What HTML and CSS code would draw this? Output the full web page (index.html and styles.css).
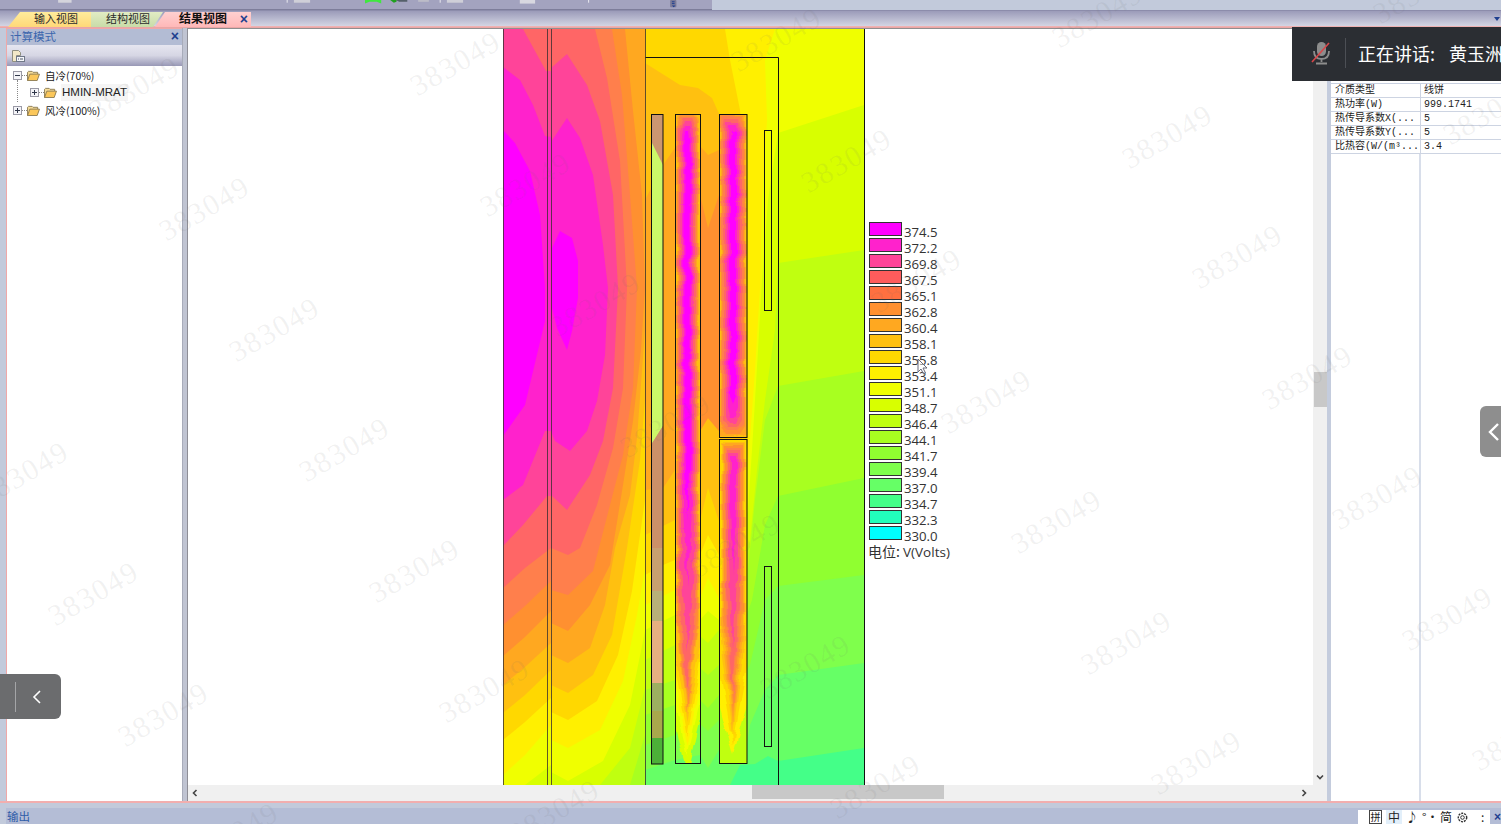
FILE: index.html
```html
<!DOCTYPE html>
<html lang="zh">
<head>
<meta charset="utf-8">
<title>结果视图</title>
<link rel="stylesheet" href="styles.css">
</head>
<body>
<svg class="defs" width="0" height="0">
  <defs>
    <symbol id="folder" viewBox="0 0 14 12">
      <path d="M.5 11.5V2.5l1-1h4l1 1h5v2" fill="#f7dd98" stroke="#8a7a50" stroke-width="1"/>
      <path d="M.5 11.5l2.5-7h10.5l-2.5 7z" fill="#fbc75a" stroke="#8a7a50" stroke-width="1"/>
    </symbol>
    <symbol id="plus" viewBox="0 0 9 9">
      <rect x=".5" y=".5" width="8" height="8" fill="#f4f4f8" stroke="#9a9aa6"/>
      <path d="M2 4.5h5M4.5 2v5" stroke="#30384a"/>
    </symbol>
    <symbol id="minus" viewBox="0 0 9 9">
      <rect x=".5" y=".5" width="8" height="8" fill="#f4f4f8" stroke="#9a9aa6"/>
      <path d="M2 4.5h5" stroke="#30384a"/>
    </symbol>
  </defs>
</svg>

<div class="topbar">
  <svg class="top-icons" width="712" height="10" viewBox="0 0 712 10">
    <rect x="25" y="0" width="15" height="3" fill="#d4d4dc"/>
    <rect x="279" y="0" width="1" height="3" fill="#f0f0f4"/>
    <rect x="287" y="0" width="18" height="3" fill="#cfcfd8"/>
    <path d="M366 0h18v4l-5-2h-8l-5 2z" fill="#3fe83f"/>
    <path d="M393 0h7l4 2h9V0z" fill="#55606a"/>
    <path d="M394 0h7v2l-3 1z" fill="#1fa01f"/>
    <rect x="425" y="0" width="12" height="2" fill="#bcbcc8"/>
    <rect x="449" y="0" width="1" height="3" fill="#f0f0f4"/>
    <rect x="457" y="0" width="18" height="3" fill="#cfcfd8"/>
    <rect x="538" y="0" width="17" height="4" fill="#d8d8e0"/>
    <rect x="614" y="0" width="1" height="3" fill="#f0f0f4"/>
    <rect x="705" y="0" width="7" height="8" rx="1" fill="#7a7a98"/>
    <path d="M707 2h3M707 4h3" stroke="#1a3a90"/>
    <path d="M707 6h4l-2 2z" fill="#1a3a90"/>
  </svg>
</div>

<div class="tabstrip">
  <div class="tab tab-input">输入视图</div>
  <div class="tab tab-struct">结构视图</div>
  <div class="tab tab-result">结果视图<span class="tab-close">×</span></div>
  <span class="strip-arrow"></span>
</div>

<div class="work">
  <aside class="calc-panel">
    <div class="panel-title"><span>计算模式</span><span class="panel-close">×</span></div>
    <div class="panel-tools">
      <svg width="14" height="14" viewBox="0 0 14 14">
        <path d="M1.5 1.5h6l2 2v3h-4v6h-4z" fill="#f2e8c8" stroke="#8f8f80"/>
        <rect x="5.5" y="7.5" width="8" height="5" fill="#f4f6fa" stroke="#707888"/>
        <path d="M7 10h1M9 10h3" stroke="#505868"/>
      </svg>
    </div>
    <div class="tree">
      <div class="tree-row">
        <svg class="exp"><use href="#minus"/></svg><i class="dots"></i>
        <svg class="fold"><use href="#folder"/></svg>
        <span class="node">自冷(70%)</span>
      </div>
      <div class="tree-row tree-child">
        <svg class="exp"><use href="#plus"/></svg><i class="dots"></i>
        <svg class="fold"><use href="#folder"/></svg>
        <span class="node node-sel">HMIN-MRAT</span>
      </div>
      <div class="tree-row">
        <svg class="exp"><use href="#plus"/></svg><i class="dots"></i>
        <svg class="fold"><use href="#folder"/></svg>
        <span class="node">风冷(100%)</span>
      </div>
    </div>
  </aside>

  <div class="splitter"></div>

  <main class="view">
    <div class="view-body">
      <div class="view-canvas">
        <svg class="field" width="362" height="756" viewBox="503 29 362 756">
          <defs>
            <filter id="wavy" x="-60%" y="-5%" width="220%" height="110%" color-interpolation-filters="sRGB">
              <feTurbulence type="fractalNoise" baseFrequency="0.012 0.07" numOctaves="2" seed="4"/>
              <feDisplacementMap in="SourceGraphic" scale="7" xChannelSelector="R" yChannelSelector="G"/>
            </filter>
            <clipPath id="clip1"><rect x="675" y="114" width="25" height="649"/></clipPath>
            <clipPath id="clip2"><rect x="719" y="114" width="28" height="323"/></clipPath>
            <clipPath id="clip3"><rect x="719" y="439" width="28" height="324"/></clipPath>
          </defs>

          <!-- winding window and outer region -->
          <rect class="t18" x="645" y="29" width="220" height="756"/>
          <polygon class="t17" points="645,29 864,29 864,748 778,761 768,756 755,764 740,765 730,785 645,785"/>
          <polygon class="t16" points="645,29 864,29 864,663 778,675 765,690 750,725 747,745 719,750 708,768 700,755 675,760 645,770"/>
          <polygon class="t15" points="645,29 864,29 864,575 778,586 765,600 750,665 719,720 708,731 700,724 675,735 645,745"/>
          <polygon class="t14" points="645,29 864,29 864,478 778,496 765,525 752,600 719,695 708,708 700,700 675,705 645,715"/>
          <polygon class="t13" points="645,29 864,29 864,371 778,386 765,420 755,500 747,580 719,665 708,675 700,668 675,680 645,690"/>
          <polygon class="t12" points="645,29 864,29 864,250 778,263 775,330 765,400 757,470 750,540 719,630 708,643 700,636 675,645 645,660"/>
          <polygon class="t11" points="645,29 864,29 864,105 778,133 768,200 762,280 758,350 752,450 748,510 719,620 708,611 700,620 675,615 645,630"/>
          <polygon class="t10" points="645,29 775,29 765,60 767,120 762,200 760,288 755,370 750,440 747,480 719,598 708,578 700,598 675,590 645,605"/>
          <polygon class="t9" points="645,29 725,29 730,60 740,110 748,190 748,440 747,460 719,555 708,535 700,555 675,560 663,565 645,575"/>
          <polygon class="t8" points="645,63 680,85 698,88 712,98 720,116 747,116 747,420 719,521 708,488 700,521 675,520 645,535"/>
          <polygon class="t7" points="645,200 663,165 675,148 700,146 708,155 719,150 747,300 719,431 708,418 700,431 675,470 663,488 645,490"/>
          <polygon class="t6" points="700,195 708,228 719,195 719,431 708,418 700,431"/>

          <!-- core gap region -->
          <rect class="t14" x="551" y="29" width="94" height="756"/>
          <polygon class="t13" points="551,29 645,29 645,735 630,785 551,785"/>
          <polygon class="t12" points="551,29 645,29 645,688 630,748 600,785 551,785"/>
          <polygon class="t11" points="551,29 645,29 645,631 630,705 603,761 568,781 551,772"/>
          <polygon class="t10" points="551,29 645,29 645,568 637,615 623,681 600,730 568,748 551,740"/>
          <polygon class="t9" points="551,29 645,29 645,500 632,591 618,655 597,701 568,720 551,712"/>
          <polygon class="t8" points="551,29 645,29 645,400 640,460 627,548 612,635 593,675 568,693 551,685"/>
          <polygon class="t7" points="551,29 645,29 645,330 637,438 630,495 615,548 605,605 590,648 568,663 551,655"/>
          <polygon class="t6" points="551,29 625,29 633,111 642,195 645,288 641,350 633,421 623,485 610,565 590,605 568,631 551,623"/>
          <polygon class="t5" points="551,29 612,29 622,95 630,195 637,288 633,388 623,455 610,505 593,571 568,595 551,590"/>
          <polygon class="t4" points="551,29 595,29 607,78 620,161 627,288 623,388 613,448 597,505 580,548 568,555 551,548"/>
          <polygon class="t3" points="551,68 567,54 587,85 600,121 613,195 618,288 613,388 603,441 590,475 567,510 551,495"/>
          <polygon class="t2" points="551,142 567,118 580,138 593,175 603,245 608,288 605,355 597,401 587,431 570,451 555,441 551,431"/>
          <polygon class="t1" points="552,248 560,231 572,238 578,261 578,298 572,331 567,350 557,328 552,308"/>

          <!-- core limb -->
          <rect class="t12" x="503" y="29" width="48" height="756"/>
          <polygon class="t11" points="503,29 551,29 551,765 525,785 503,785"/>
          <polygon class="t10" points="503,29 551,29 551,725 525,755 503,775"/>
          <polygon class="t9" points="503,29 551,29 551,698 525,722 503,740"/>
          <polygon class="t8" points="503,29 551,29 551,670 525,695 503,713"/>
          <polygon class="t7" points="503,29 551,29 551,643 525,667 503,685"/>
          <polygon class="t6" points="503,29 551,29 551,611 525,637 503,656"/>
          <polygon class="t5" points="503,29 551,29 551,581 525,606 503,625"/>
          <polygon class="t4" points="503,29 551,29 551,548 525,568 503,588"/>
          <polygon class="t3" points="503,29 523,29 546,71 551,71 551,496 547,496 523,525 503,546"/>
          <polygon class="t2" points="503,67 520,80 533,105 545,136 551,137 551,431 545,431 523,485 503,500"/>
          <polygon class="t1" points="503,130 515,143 530,171 540,215 545,288 545,321 525,405 503,436"/>

          <!-- left winding tray -->
          <rect fill="#cc9670" x="651" y="114" width="12" height="331"/>
          <polygon fill="#ccf868" points="651,141 663,165 663,426 651,445"/>
          <rect fill="#cc9068" x="651" y="445" width="12" height="103"/>
          <polygon fill="#cc9068" points="651,445 663,426 663,450 651,450"/>
          <rect fill="#c8a070" x="651" y="548" width="12" height="43"/>
          <rect fill="#b8b078" x="651" y="591" width="12" height="30"/>
          <rect fill="#e6b080" x="651" y="621" width="12" height="62"/>
          <rect fill="#9cb060" x="651" y="683" width="12" height="28"/>
          <rect fill="#a8a84c" x="651" y="711" width="12" height="27"/>
          <rect fill="#4cb038" x="651" y="738" width="12" height="26"/>

          <!-- low voltage winding -->
          <g clip-path="url(#clip1)"><g filter="url(#wavy)">
            <path class="t12" d="M670 100H705V700L687.500 775L670 700Z"/>
            <path class="t11" d="M670 100H705V680L687.500 755L670 680Z"/>
            <path class="t10" d="M670 100H705V660L687.500 745L670 660Z"/>
            <path class="t9" d="M670 100H705V640L687.500 735L670 640Z"/>
            <path class="t8" d="M670 100H705V620L687.500 722L670 620Z"/>
            <path class="t7" d="M678 115H697L699 122V620L687.500 715L676 620V122Z"/>
            <path class="t6" d="M680 116H695L698 124V620L687.500 708L677 620V124Z"/>
            <path class="t5" d="M681 118H694L697 128V610L687.500 700L678 610V128Z"/>
            <path class="t4" d="M683 120H692L696 130V600L687.500 690L679 600V130Z"/>
            <path class="t3" d="M684 123H691L694 133V570L687.500 650L681 570V133Z"/>
            <path class="t2" d="M685 127H690L692 136V510L687.500 585L683 510V136Z"/>
            <path class="t1" d="M686 133H689L690.500 142V460L687.500 520L684.500 460V142Z"/>
          </g></g>
          <g clip-path="url(#clip2)"><g filter="url(#wavy)">
            <path class="t8" d="M712 106H754V445H712Z"/>
            <path class="t7" d="M720 115H746V436H720Z"/>
            <path class="t6" d="M722 116H744L745 124V426L740 434H726L721 426V124Z"/>
            <path class="t5" d="M724 117H742L744 126V424L738 431H728L722 424V126Z"/>
            <path class="t4" d="M726 119H740L742 128V420L737 428H729L724 420V128Z"/>
            <path class="t3" d="M727 122H739L740 132V414L736 424H730L726 414V132Z"/>
            <path class="t2" d="M729 125H737L738 136V408L735 418H731L728 408V136Z"/>
            <path class="t1" d="M731 132H735L736 144V395L733 405L730 395V144Z"/>
          </g></g>
          <g clip-path="url(#clip3)"><g filter="url(#wavy)">
            <path class="t13" d="M712 432H754V775H712Z"/>
            <path class="t10" d="M712 432H754V680L733 755L712 680Z"/>
            <path class="t9" d="M718 436H748V660L733 745L718 660Z"/>
            <path class="t8" d="M721 442H745V640L733 735L721 640Z"/>
            <path class="t7" d="M722 443H744V625L733 725L722 625Z"/>
            <path class="t6" d="M723 445H743V610L733 715L723 610Z"/>
            <path class="t5" d="M725 447H741V600L733 705L725 600Z"/>
            <path class="t4" d="M726 449H740V590L733 690L726 590Z"/>
            <path class="t3" d="M728 452H738V560L733 650L728 560Z"/>
            <path class="t2" d="M730 456H736V510L733 575L730 510Z"/>
          </g></g>

          <!-- outlines -->
          <g class="outline-soft">
            <path d="M503.500 29V785M547.500 29V785M551.500 29V785M645.500 29V785"/>
          </g>
          <g class="outline">
            <path d="M645.500 57.500H778.500V785M864.500 29V785"/>
            <rect x="651.500" y="114.500" width="11.500" height="649.500"/>
            <rect x="675.500" y="114.500" width="25" height="649"/>
            <rect x="719.500" y="114.500" width="27.500" height="323"/>
            <rect x="719.500" y="439.500" width="27.500" height="324"/>
            <rect x="764.500" y="130.500" width="7" height="180"/>
            <rect x="764.500" y="566.500" width="7" height="180"/>
          </g>
        </svg>
        <div class="legend">
          <div class="legend-row"><i class="sw s1"></i>374.5</div>
          <div class="legend-row"><i class="sw s2"></i>372.2</div>
          <div class="legend-row"><i class="sw s3"></i>369.8</div>
          <div class="legend-row"><i class="sw s4"></i>367.5</div>
          <div class="legend-row"><i class="sw s5"></i>365.1</div>
          <div class="legend-row"><i class="sw s6"></i>362.8</div>
          <div class="legend-row"><i class="sw s7"></i>360.4</div>
          <div class="legend-row"><i class="sw s8"></i>358.1</div>
          <div class="legend-row"><i class="sw s9"></i>355.8</div>
          <div class="legend-row"><i class="sw s10"></i>353.4</div>
          <div class="legend-row"><i class="sw s11"></i>351.1</div>
          <div class="legend-row"><i class="sw s12"></i>348.7</div>
          <div class="legend-row"><i class="sw s13"></i>346.4</div>
          <div class="legend-row"><i class="sw s14"></i>344.1</div>
          <div class="legend-row"><i class="sw s15"></i>341.7</div>
          <div class="legend-row"><i class="sw s16"></i>339.4</div>
          <div class="legend-row"><i class="sw s17"></i>337.0</div>
          <div class="legend-row"><i class="sw s18"></i>334.7</div>
          <div class="legend-row"><i class="sw s19"></i>332.3</div>
          <div class="legend-row"><i class="sw s20"></i>330.0</div>
          <div class="legend-unit">电位: <span>V(Volts)</span></div>
        </div>
      </div>
      <div class="hscroll">
        <svg class="hs-arrow" width="8" height="8" viewBox="0 0 8 8"><path d="M5.500 1L2.500 4l3 3" fill="none" stroke="#444" stroke-width="1.600"/></svg>
        <div class="hs-thumb"></div>
        <svg class="hs-arrow hs-end" width="8" height="8" viewBox="0 0 8 8"><path d="M2.500 1l3 3-3 3" fill="none" stroke="#444" stroke-width="1.600"/></svg>
      </div>
    </div>
    <div class="vscroll">
      <div class="vs-thumb"></div>
      <svg class="vs-arrow" width="8" height="8" viewBox="0 0 8 8"><path d="M1 2.500l3 3 3-3" fill="none" stroke="#444" stroke-width="1.600"/></svg>
    </div>
  </main>

  <aside class="props">
    <div class="props-spacer"></div>
    <div class="prop-row"><span class="prop-k">介质类型</span><span class="prop-v">线饼</span></div>
    <div class="prop-row"><span class="prop-k">热功率(W)</span><span class="prop-v">999.1741</span></div>
    <div class="prop-row"><span class="prop-k">热传导系数X(...</span><span class="prop-v">5</span></div>
    <div class="prop-row"><span class="prop-k">热传导系数Y(...</span><span class="prop-v">5</span></div>
    <div class="prop-row"><span class="prop-k">比热容(W/(m³...</span><span class="prop-v">3.4</span></div>
    <div class="props-rest"><span class="prop-k"></span><span class="prop-v"></span></div>
  </aside>
</div>

<footer class="status">
  <span class="status-title">输出</span>
  <div class="ime">
    <span class="ime-box">拼</span>
    <span class="ime-on">中</span>
    <span class="ime-moon">♪</span>
    <span class="ime-dots">°•</span>
    <span>简</span>
    <svg width="13" height="13" viewBox="0 0 13 13"><circle cx="6.500" cy="6.500" r="4.200" fill="none" stroke="#333" stroke-width="1.400" stroke-dasharray="2 1"/><circle cx="6.500" cy="6.500" r="1.800" fill="none" stroke="#333"/></svg>
    <span class="ime-more">:</span>
  </div>
  <span class="status-x">×</span>
</footer>

<div class="speaking">
  <svg width="22" height="24" viewBox="0 0 22 24">
    <rect x="7" y="1" width="9" height="14" rx="4.500" fill="#8d8d8d"/>
    <path d="M4 10c0 6 3 8 7.500 8s7.500-2 7.500-8M11.500 18v3M6 22.500h11" fill="none" stroke="#8d8d8d" stroke-width="1.800"/>
    <path d="M2 21L19 2" stroke="#d9474a" stroke-width="1.600"/>
  </svg>
  <i class="speaking-div"></i>
  <span class="speaking-text">正在讲话:</span>
  <span class="speaking-name">黄玉洲</span>
</div>

<div class="handle handle-left">
  <i class="handle-bar"></i>
  <svg width="10" height="16" viewBox="0 0 10 16"><path d="M8 2L2 8l6 6" fill="none" stroke="#fff" stroke-width="1.600"/></svg>
</div>
<div class="handle handle-right">
  <svg width="14" height="22" viewBox="0 0 14 22"><path d="M11 3L3 11l8 8" fill="none" stroke="#fff" stroke-width="2.400"/></svg>
</div>

<svg class="cursor" width="12" height="18" viewBox="0 0 12 18">
  <path d="M1 1v13l3-3 2.500 5 2-1-2.500-5h4z" fill="#ffffff" fill-opacity=".5" stroke="#6a6a7a"/>
</svg>

<svg class="watermarks" width="1501" height="824" viewBox="0 0 1501 824">
  <g transform="translate(3,1)">
  <text transform="translate(133,90) rotate(-30)">383049</text>
  <text transform="translate(203,210) rotate(-30)">383049</text>
  <text transform="translate(273,331) rotate(-30)">383049</text>
  <text transform="translate(343,451) rotate(-30)">383049</text>
  <text transform="translate(413,572) rotate(-30)">383049</text>
  <text transform="translate(483,692) rotate(-30)">383049</text>
  <text transform="translate(553,813) rotate(-30)">383049</text>
  <text transform="translate(22,475) rotate(-30)">383049</text>
  <text transform="translate(92,595) rotate(-30)">383049</text>
  <text transform="translate(162,716) rotate(-30)">383049</text>
  <text transform="translate(232,836) rotate(-30)">383049</text>
  <text transform="translate(454,65) rotate(-30)">383049</text>
  <text transform="translate(524,186) rotate(-30)">383049</text>
  <text transform="translate(594,306) rotate(-30)">383049</text>
  <text transform="translate(664,427) rotate(-30)">383049</text>
  <text transform="translate(734,547) rotate(-30)">383049</text>
  <text transform="translate(804,668) rotate(-30)">383049</text>
  <text transform="translate(874,788) rotate(-30)">383049</text>
  <text transform="translate(775,41) rotate(-30)">383049</text>
  <text transform="translate(845,162) rotate(-30)">383049</text>
  <text transform="translate(915,282) rotate(-30)">383049</text>
  <text transform="translate(985,403) rotate(-30)">383049</text>
  <text transform="translate(1055,523) rotate(-30)">383049</text>
  <text transform="translate(1125,644) rotate(-30)">383049</text>
  <text transform="translate(1195,764) rotate(-30)">383049</text>
  <text transform="translate(1096,17) rotate(-30)">383049</text>
  <text transform="translate(1166,138) rotate(-30)">383049</text>
  <text transform="translate(1236,258) rotate(-30)">383049</text>
  <text transform="translate(1306,379) rotate(-30)">383049</text>
  <text transform="translate(1376,499) rotate(-30)">383049</text>
  <text transform="translate(1446,620) rotate(-30)">383049</text>
  <text transform="translate(1516,740) rotate(-30)">383049</text>
  <text transform="translate(1487,114) rotate(-30)">383049</text>
  <text transform="translate(1417,-7) rotate(-30)">383049</text>
  </g>
</svg>
</body>
</html>
```
FILE: styles.css
```css
* { box-sizing: border-box; }
html, body { margin: 0; padding: 0; }
body {
  width: 1501px;
  height: 824px;
  overflow: hidden;
  display: flex;
  flex-direction: column;
  position: relative;
  background: #c2cadb;
  font-family: "Liberation Sans", "Noto Sans CJK SC", sans-serif;
}
.defs { position: absolute; }

.topbar {
  height: 10px;
  flex: none;
  background: #c2cadb;
}
.top-icons { display: block; background: #a3a3bf; border-bottom: 1px solid #7d7d9a; }

.tabstrip {
  height: 18px;
  flex: none;
  display: flex;
  align-items: flex-end;
  padding: 0 0 1px 8px;
  position: relative;
  background: linear-gradient(#9b9bb9, #d4d6e4 90%, #f0b4b4 90%, #e8a0a0);
  border-top: 1px solid #8c8cab;
}
.tab {
  height: 15px;
  font: 11px/12px "Noto Sans CJK SC", sans-serif;
  color: #2c2c2c;
  text-align: left;
}
.tab-input {
  width: 83px;
  padding-left: 26px;
  background: linear-gradient(#ffec9c, #ffd878);
  clip-path: polygon(12px 0, 100% 0, 100% 100%, 0 100%);
}
.tab-struct {
  width: 72px;
  padding-left: 15px;
  background: linear-gradient(#e2ecc4, #c8dca8);
  clip-path: polygon(0 0, 100% 0, 62px 100%, 0 100%);
}
.tab-result {
  width: 96px;
  margin-left: -8px;
  padding-left: 24px;
  font-size: 12px;
  font-weight: 700;
  color: #111;
  position: relative;
  background: linear-gradient(#ffd0d0, #ffb8b8);
  clip-path: polygon(10px 0, 100% 0, 100% 100%, 0 100%);
}
.tab-close {
  position: absolute;
  right: 3px;
  top: 0;
  color: #1f3f8f;
  font: 700 14px/15px "Liberation Sans", sans-serif;
}
.strip-arrow {
  position: absolute;
  right: 1px;
  top: 6px;
  border: 3px solid transparent;
  border-top: 4px solid #1f3f8f;
}

.work {
  height: 775px;
  flex: none;
  display: flex;
  padding-left: 6px;
  border-bottom: 2px solid #f2aeae;
}

.calc-panel {
  width: 176px;
  flex: none;
  display: flex;
  flex-direction: column;
  background: #fff;
  border-left: 1px solid #efa8a8;
  border-top: 1px solid #efa8a8;
}
.panel-title {
  height: 16px;
  flex: none;
  display: flex;
  justify-content: space-between;
  align-items: center;
  padding: 0 3px 2px 3px;
  background: #b3bcd4;
  color: #3b66ad;
  font: 11.500px/14px "Noto Sans CJK SC", sans-serif;
}
.panel-close { color: #1f3f8f; font: 700 14px/14px "Liberation Sans", sans-serif; }
.panel-tools {
  height: 21px;
  flex: none;
  padding: 4px 0 0 4px;
  background: linear-gradient(#e6e6f0, #d6d6e4 50%, #9898b6);
}
.tree { position: relative; padding-top: .5px; }
.tree-row {
  height: 17.500px;
  display: flex;
  align-items: center;
  padding-left: 6px;
  position: relative;
  font: 10.500px/17px "Noto Sans CJK SC", sans-serif;
  color: #222;
}
.tree-child { padding-left: 23px; }
.tree-child::before {
  content: "";
  position: absolute;
  left: 10px;
  top: -4px;
  height: 22px;
  width: 12px;
  border-left: 1px dotted #888;
}
.exp { width: 9px; height: 9px; flex: none; }
.dots { width: 5px; flex: none; border-top: 1px dotted #888; }
.fold { width: 13px; height: 11px; flex: none; }
.node { margin-left: 4px; padding: 0 1px; }
.node-sel { font: 11.500px/17px "Liberation Sans", sans-serif; background: #f5f5f5; }

.splitter {
  width: 6px;
  flex: none;
  background: #c0c4d2;
  border-right: 1px solid #8e8e96;
  border-left: 1px solid #a8acba;
}

.view {
  flex: 1;
  display: flex;
  background: #fff;
  border-top: 1px solid #8f8f8f;
  min-width: 0;
}
.view-body { flex: 1; display: flex; flex-direction: column; min-width: 0; }
.view-canvas {
  flex: 1;
  min-height: 0;
  display: flex;
  padding-left: 315px;
}
.field { display: block; flex: none; }

.t1 { fill: #ff00ff; } .t2 { fill: #ff22cc; } .t3 { fill: #ff4499; } .t4 { fill: #ff6666; }
.t5 { fill: #ff7f4c; } .t6 { fill: #ff9030; } .t7 { fill: #ffa820; } .t8 { fill: #ffc010; }
.t9 { fill: #ffd800; } .t10 { fill: #fff000; } .t11 { fill: #f0ff00; } .t12 { fill: #d8ff00; }
.t13 { fill: #c0ff10; } .t14 { fill: #a8ff20; } .t15 { fill: #90ff30; } .t16 { fill: #7fff4c; }
.t17 { fill: #66ff66; } .t18 { fill: #44ff88; }
.outline { fill: none; stroke: #111; stroke-width: 1; }
.outline-soft { fill: none; stroke: #3a3030; stroke-opacity: .8; stroke-width: 1; }

.legend {
  margin: 195px 0 0 4px;
  width: 110px;
  font: 13.200px/16px "Open Sans", sans-serif;
  color: #333;
}
.legend-row { height: 16px; display: flex; align-items: center; }
.sw {
  width: 33px;
  height: 14px;
  flex: none;
  margin-right: 2px;
  margin-top: -7px;
  border: 1.500px solid #333;
}
.s1 { background: #ff00ff; } .s2 { background: #ff22cc; } .s3 { background: #ff4499; } .s4 { background: #ff5c5c; }
.s5 { background: #ff7040; } .s6 { background: #ff9030; } .s7 { background: #ffa820; } .s8 { background: #ffc010; }
.s9 { background: #ffd800; } .s10 { background: #fff000; } .s11 { background: #f0ff00; } .s12 { background: #d8ff00; }
.s13 { background: #c0ff10; } .s14 { background: #a8ff20; } .s15 { background: #90ff30; } .s16 { background: #7fff4c; }
.s17 { background: #66ff66; } .s18 { background: #44ff88; } .s19 { background: #22ffbb; } .s20 { background: #00ffff; }
.legend-unit {
  margin: -2px 0 0 -1px;
  font: 14px/18px "Noto Sans CJK SC", sans-serif;
  white-space: nowrap;
}
.legend-unit span { font: 13.500px/18px "Open Sans", sans-serif; }

.hscroll {
  height: 16px;
  flex: none;
  display: flex;
  align-items: center;
  background: #f0f0f0;
  padding-left: 3px;
  position: relative;
}
.hs-thumb {
  position: absolute;
  left: 564px;
  top: 0;
  width: 192px;
  height: 14px;
  background: #c8c8c8;
}
.hs-end { margin-left: auto; margin-right: 5px; }

.vscroll {
  width: 14px;
  flex: none;
  display: flex;
  flex-direction: column;
  align-items: center;
  background: #f0f0f0;
  padding-top: 343px;
  height: 100%;
}
.vs-thumb { width: 13px; height: 35px; background: #c8c8c8; }
.vs-arrow { margin-top: 366px; }

.props {
  width: 174px;
  flex: none;
  display: flex;
  flex-direction: column;
  background: #fff;
  border-left: 4px solid #c4ccdd;
  font: 10px/14px "Liberation Mono", "Noto Sans CJK SC", monospace;
  color: #222;
}
.props-spacer { height: 56px; flex: none; border-bottom: 1px solid #c8d0e0; }
.prop-row {
  height: 14px;
  flex: none;
  display: flex;
  border-bottom: 1px solid #cdd4e2;
  white-space: nowrap;
}
.prop-k {
  width: 90px;
  flex: none;
  padding-left: 4px;
  overflow: hidden;
  border-right: 1px solid #cdd4e2;
}
.prop-v { padding-left: 3px; flex: 1; }
.props-rest { flex: 1; display: flex; }
.props-rest .prop-k { border-right: 2px solid #d8deea; }

.status {
  flex: 1;
  display: flex;
  align-items: flex-end;
  position: relative;
  padding-left: 6px;
  background: #c2cadb;
}
.status-title {
  flex: 1;
  height: 16px;
  background: #b4bdd6;
  color: #2f5ca8;
  font: 11.500px/16px "Noto Sans CJK SC", sans-serif;
  padding-left: 1px;
}
.ime {
  position: absolute;
  right: 11px;
  bottom: 0;
  width: 132px;
  height: 14px;
  background: #fff;
  display: flex;
  align-items: center;
  gap: 4px;
  font: 12px/14px "Noto Sans CJK SC", sans-serif;
  color: #222;
  padding-left: 11px;
}
.ime-box { border: 1px solid #444; height: 14px; line-height: 12px; font-size: 10px; width: 13px; text-align: center; }
.ime-on { background: #e2effa; width: 16px; text-align: center; }
.ime-moon { width: 12px; text-align: center; }
.ime-dots { width: 14px; text-align: center; }
.ime-more { margin-left: 8px; }
.status-x {
  position: absolute;
  right: 0;
  bottom: 1px;
  color: #1f3f8f;
  font: 700 12px/12px "Liberation Sans", sans-serif;
}

.speaking {
  position: absolute;
  left: 1292px;
  top: 27px;
  width: 209px;
  height: 54px;
  background: #2b2e33;
  display: flex;
  align-items: center;
  padding: 0 0 2px 18px;
  color: #fff;
  overflow: hidden;
  white-space: nowrap;
  font: 18px/24px "Noto Sans CJK SC", sans-serif;
}
.speaking svg { flex: none; }
.speaking-div { width: 1px; height: 30px; background: #4c4f55; margin: 0 12px 0 13px; flex: none; }
.speaking-name { margin-left: 14px; }

.handle {
  position: absolute;
  display: flex;
  align-items: center;
}
.handle-left {
  left: 0;
  top: 674px;
  width: 61px;
  height: 45px;
  background: #6b6c6e;
  border-radius: 0 6px 6px 0;
  padding-left: 15px;
}
.handle-bar { width: 1px; height: 30px; background: #a4a5a7; margin-right: 16px; }
.handle-right {
  left: 1480px;
  top: 406px;
  width: 21px;
  height: 51px;
  background: #8e8e8e;
  border-radius: 6px 0 0 6px;
  padding-left: 7px;
}

.cursor { position: absolute; left: 917px; top: 358px; }

.watermarks {
  position: absolute;
  left: 0;
  top: 0;
  pointer-events: none;
}
.watermarks text {
  font: 30px "Liberation Serif", serif;
  letter-spacing: 1.500px;
  text-anchor: middle;
  dominant-baseline: middle;
  fill: #6c6c6c;
  fill-opacity: .09;
}
```
